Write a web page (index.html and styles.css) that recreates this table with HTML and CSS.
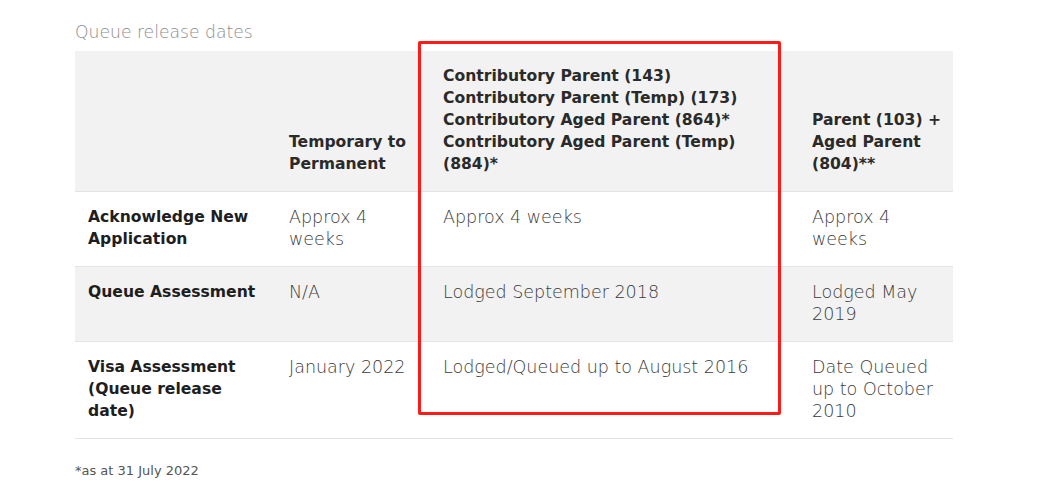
FILE: index.html
```html
<!DOCTYPE html>
<html>
<head>
<meta charset="utf-8">
<link rel="stylesheet" href="styles.css">
</head>
<body>
<div class="wrap">
  <div class="caption">Queue release dates</div>
  <table class="queue">
    <colgroup>
      <col class="c1"><col class="c2"><col class="c3"><col class="c4">
    </colgroup>
    <thead>
      <tr>
        <th></th>
        <th>Temporary to Permanent</th>
        <th>Contributory Parent (143)<br>Contributory Parent (Temp) (173)<br>Contributory Aged Parent (864)*<br>Contributory Aged Parent (Temp) (884)*</th>
        <th>Parent (103) + Aged Parent (804)**</th>
      </tr>
    </thead>
    <tbody>
      <tr>
        <th>Acknowledge New Application</th>
        <td>Approx 4 weeks</td>
        <td>Approx 4 weeks</td>
        <td>Approx 4 weeks</td>
      </tr>
      <tr class="alt">
        <th>Queue Assessment</th>
        <td>N/A</td>
        <td>Lodged September 2018</td>
        <td>Lodged May 2019</td>
      </tr>
      <tr>
        <th>Visa Assessment (Queue release date)</th>
        <td>January 2022</td>
        <td>Lodged/Queued up to August 2016</td>
        <td>Date Queued up to October 2010</td>
      </tr>
    </tbody>
  </table>
  <div class="highlight"></div>
  <p class="note">*as at 31 July 2022</p>
</div>
</body>
</html>
```
FILE: styles.css
```css
html, body {
  margin: 0;
  padding: 0;
  background: #ffffff;
}
body {
  font-family: "DejaVu Sans", "Liberation Sans", sans-serif;
}
.wrap {
  position: relative;
  width: 878px;
  margin-left: 75px;
  padding-top: 21px;
}
.caption {
  font-size: 17.2px;
  font-weight: 300;
  color: #8c8c8c;
  line-height: 22px;
  margin-bottom: 8px;
}
.queue {
  width: 878px;
  border-collapse: collapse;
  table-layout: fixed;
}
.c1 { width: 202px; }
.c2 { width: 154px; }
.c3 { width: 369px; }
.c4 { width: 153px; }
.queue th, .queue td {
  padding: 14px 7px 16px 12px;
  text-align: left;
  vertical-align: top;
  line-height: 22px;
  border-bottom: 1px solid #e3e3e3;
}
.queue thead tr {
  background: #f2f2f2;
}
.queue th {
  font-weight: 700;
  font-size: 15.6px;
  color: #2a2a2a;
}
.queue thead th {
  vertical-align: bottom;
}
.queue tbody th {
  padding-left: 13px;
  color: #1e1e1e;
}
.queue td {
  padding-right: 12px;
  font-weight: 300;
  font-size: 17.5px;
  color: #3a3a3a;
}
.queue tr.alt {
  background: #f2f2f2;
}
.highlight {
  position: absolute;
  left: 343px;
  top: 41px;
  width: 357px;
  height: 368px;
  border: 3px solid #ff1a1a;
  border-radius: 2px;
}
.note {
  margin: 23px 0 0;
  font-size: 13px;
  line-height: 18px;
  color: #555;
  font-weight: 400;
}
```
